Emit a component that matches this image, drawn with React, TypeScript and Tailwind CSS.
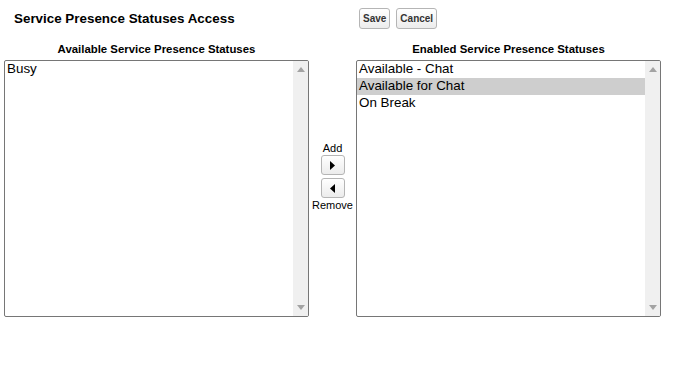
import React from "react";

const font = { fontFamily: '"Liberation Sans", Arial, sans-serif' };

const ScrollTrack = () => (
  <div className="w-[15px] shrink-0 bg-[#f0f0f0] flex flex-col justify-between items-center py-[6px]">
    <svg width="8" height="5" viewBox="0 0 8 5">
      <path d="M4 0 L8 5 L0 5 Z" fill="#a3a3a3" />
    </svg>
    <svg width="8" height="5" viewBox="0 0 8 5">
      <path d="M0 0 L8 0 L4 5 Z" fill="#a3a3a3" />
    </svg>
  </div>
);

const ListBox = ({ items, selected }: { items: string[]; selected?: number }) => (
  <div className="w-[305px] h-[257px] border border-[#767676] rounded-[2px] bg-white flex overflow-hidden">
    <div className="flex-1 flex flex-col">
      {items.map((item, index) => (
        <div
          key={index}
          className={`h-[17px] leading-[16px] pl-[2px] text-[13.4px] text-black ${index === selected ? "bg-[#cecece]" : ""}`}
        >
          {item}
        </div>
      ))}
    </div>
    <ScrollTrack />
  </div>
);

const SmallButton = ({ label }: { label: string }) => (
  <button className="h-[21px] px-[3px] border border-[#b5b5b5] rounded-[3px] bg-gradient-to-b from-white to-[#ececec] text-[10px] font-bold text-[#333] leading-none">
    {label}
  </button>
);

const ArrowButton = ({ dir }: { dir: "right" | "left" }) => (
  <button className="w-[24px] h-[20px] border border-[#b5b5b5] rounded-[3px] bg-gradient-to-b from-white to-[#ececec] flex items-center justify-center">
    <svg width="5" height="9" viewBox="0 0 5 9">
      {dir === "right" ? <path d="M0 0 L5 4.5 L0 9 Z" fill="#000" /> : <path d="M5 0 L0 4.5 L5 9 Z" fill="#000" />}
    </svg>
  </button>
);

export default function App() {
  return (
    <div className="w-[697px] h-[392px] bg-white" style={font}>
      <div className="flex items-center pt-[8px] h-[29px]">
        <div className="w-[359px] pl-[14px] pt-[2px] text-[13.4px] font-bold text-black">Service Presence Statuses Access</div>
        <div className="flex gap-[6px]">
          <SmallButton label="Save" />
          <SmallButton label="Cancel" />
        </div>
      </div>
      <div className="flex pl-[4px] pt-[12px]">
        <div className="flex flex-col">
          <div className="text-center text-[11.4px] font-bold text-black h-[19px] leading-[16px]">Available Service Presence Statuses</div>
          <ListBox items={["Busy"]} />
        </div>
        <div className="w-[47px] flex flex-col items-center pt-[101px] text-[11px] text-black">
          <div className="leading-[13px]">Add</div>
          <ArrowButton dir="right" />
          <div className="h-[3px]" />
          <ArrowButton dir="left" />
          <div className="leading-[13px] mt-[1px]">Remove</div>
        </div>
        <div className="flex flex-col">
          <div className="text-center text-[11.4px] font-bold text-black h-[19px] leading-[16px]">Enabled Service Presence Statuses</div>
          <ListBox items={["Available - Chat", "Available for Chat", "On Break"]} selected={1} />
        </div>
      </div>
    </div>
  );
}
